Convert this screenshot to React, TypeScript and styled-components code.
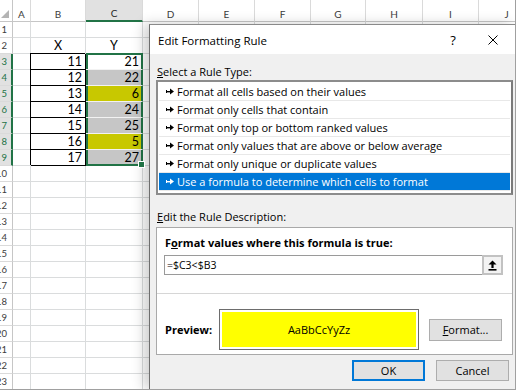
import React from 'react';
import styled, { createGlobalStyle, css } from 'styled-components';

const GREEN = '#217346';
const BLUE = '#0078d7';

const COL_NAMES = ['A', 'B', 'C', 'D', 'E', 'F', 'G', 'H', 'I', 'J'];
const ROW_COUNT = 23;
const X_VALUES = [11, 12, 13, 14, 15, 16, 17];
const Y_VALUES = [21, 22, 6, 24, 25, 5, 27];

const RULE_TYPES = [
    'Format all cells based on their values',
    'Format only cells that contain',
    'Format only top or bottom ranked values',
    'Format only values that are above or below average',
    'Format only unique or duplicate values',
    'Use a formula to determine which cells to format',
];

const GlobalStyle = createGlobalStyle`
  html, body {
    margin: 0;
    padding: 0;
    background: #ffffff;
  }
  body {
    font-family: "Open Sans", "Noto Sans", sans-serif;
  }
`;

export default function App() {
    const rows = Array.from({ length: ROW_COUNT }, (_, i) => i + 1);

    const renderCell = (row: number, col: string) => {
        const key = `${col}${row}`;
        const idx = row - 3;
        const inData = idx >= 0 && idx < X_VALUES.length;

        if (row === 2 && col === 'B') return <Cell key={key} $align="center">X</Cell>;
        if (row === 2 && col === 'C') return <Cell key={key} $align="center">Y</Cell>;
        if (inData && col === 'B') return <Cell key={key} $align="right" $boxed>{X_VALUES[idx]}</Cell>;
        if (inData && col === 'C') {
            const y = Y_VALUES[idx];
            const fill = idx === 0 ? '#ffffff' : y < X_VALUES[idx] ? '#c8c800' : '#c6c6c6';
            const last = idx === Y_VALUES.length - 1;
            return (
                <SelectedCell key={key} $align="right" $fill={fill} $top={idx === 0} $bottom={last}>
                    {y}
                    {last && <FillHandle />}
                </SelectedCell>
            );
        }
        return <Cell key={key} />;
    };

    return (
        <>
            <GlobalStyle />
            <Frame>
                <Sheet>
                    <Corner />
                    {COL_NAMES.map((c) => (
                        <ColHeader key={c} $selected={c === 'C'}>{c}</ColHeader>
                    ))}
                    {rows.map((r) => (
                        <React.Fragment key={r}>
                            <RowHeader $selected={r >= 3 && r <= 9}><span>{r}</span></RowHeader>
                            {COL_NAMES.map((c) => renderCell(r, c))}
                        </React.Fragment>
                    ))}
                </Sheet>

                <Dialog>
                    <TitleBar>
                        <Title>Edit Formatting Rule</Title>
                        <TitleButton>?</TitleButton>
                        <TitleButton>
                            <svg width="10" height="10" viewBox="0 0 10 10">
                                <path d="M0.5 0.5 L9.5 9.5 M9.5 0.5 L0.5 9.5" stroke="#000" strokeWidth="1" fill="none" />
                            </svg>
                        </TitleButton>
                    </TitleBar>

                    <Body>
                        <SectionLabel><u>S</u>elect a Rule Type:</SectionLabel>
                        <RuleList>
                            {RULE_TYPES.map((t, i) => (
                                <RuleItem key={t} $selected={i === 5}>
                                    <svg width="8" height="7" viewBox="0 0 8 7">
                                        <rect x="0" y="2" width="1" height="3" fill="currentColor" />
                                        <rect x="0" y="3" width="5" height="1.4" fill="currentColor" />
                                        <path d="M4 0.5 L8 3.5 L4 6.5 Z" fill="currentColor" />
                                    </svg>
                                    <span>{t}</span>
                                </RuleItem>
                            ))}
                        </RuleList>

                        <SectionLabel $spaced><u>E</u>dit the Rule Description:</SectionLabel>
                        <RuleBox>
                            <FormulaSection>
                                <BoldLabel>F<u>o</u>rmat values where this formula is true:</BoldLabel>
                                <FormulaField>
                                    <FormulaText>=$C3&lt;$B3</FormulaText>
                                    <CollapseButton>
                                        <svg width="9" height="11" viewBox="0 0 9 11">
                                            <path d="M4.5 0.5 L8.5 4.5 L5.6 4.5 L5.6 8 L3.4 8 L3.4 4.5 L0.5 4.5 Z" fill="#000" />
                                            <rect x="0.5" y="9" width="8" height="1.6" fill="#000" />
                                        </svg>
                                    </CollapseButton>
                                </FormulaField>
                            </FormulaSection>
                            <PreviewSection>
                                <PreviewLabel>Preview:</PreviewLabel>
                                <PreviewBox>
                                    <PreviewSample>AaBbCcYyZz</PreviewSample>
                                </PreviewBox>
                                <DialogButton $width={73} $height={22}><u>F</u>ormat...</DialogButton>
                            </PreviewSection>
                        </RuleBox>

                        <ButtonRow>
                            <DialogButton $width={73} $height={21} $default>OK</DialogButton>
                            <DialogButton $width={73} $height={21}>Cancel</DialogButton>
                        </ButtonRow>
                    </Body>
                </Dialog>
            </Frame>
        </>
    );
}

const Frame = styled.div`
    position: relative;
    box-sizing: border-box;
    width: 516px;
    height: 390px;
    overflow: hidden;
    border-right: 1px solid #a0a0a0;
    border-bottom: 1px solid #a0a0a0;
    background: #ffffff;
`;

const Sheet = styled.div`
    display: grid;
    grid-template-columns: 13px 18px 55px 57px 56px 56px 56px 55px 57px 56px 56px;
    grid-template-rows: 22px;
    grid-auto-rows: 16px;
    font-family: Lato, "Open Sans", sans-serif;
`;

const HeaderBase = styled.div`
    box-sizing: border-box;
    background: #ffffff;
    color: #3c3c3c;
    font-size: 9.5px;
    display: flex;
    overflow: hidden;
`;

const Corner = styled(HeaderBase)`
    position: relative;
    border-right: 1px solid #c6c6c6;
    border-bottom: 1px solid #c6c6c6;

    &::after {
        content: '';
        position: absolute;
        right: 3px;
        bottom: 3px;
        border-left: 8px solid transparent;
        border-bottom: 8px solid #b4b4b4;
    }
`;

const ColHeader = styled(HeaderBase)<{ $selected?: boolean }>`
    justify-content: center;
    align-items: center;
    padding-top: 6px;
    border-right: 1px solid #dadada;
    border-bottom: 1px solid #c6c6c6;
    font-size: 10px;

    ${(p) => p.$selected && css`
        background: #e1e1e1;
        border-bottom: 2px solid ${GREEN};
        color: #262626;
    `}
`;

const RowHeader = styled(HeaderBase)<{ $selected?: boolean }>`
    justify-content: flex-end;
    align-items: center;
    padding-right: 5px;
    border-right: 1px solid #c6c6c6;
    border-bottom: 1px solid #dadada;

    ${(p) => p.$selected && css`
        background: #e1e1e1;
        border-right: 2px solid ${GREEN};
        padding-right: 4px;
        color: ${GREEN};
    `}
`;

const Cell = styled.div<{ $align?: 'left' | 'center' | 'right'; $boxed?: boolean }>`
    box-sizing: border-box;
    display: flex;
    align-items: center;
    justify-content: ${(p) => (p.$align === 'right' ? 'flex-end' : p.$align === 'center' ? 'center' : 'flex-start')};
    padding: 0 3px;
    border-right: 1px solid #dadcdd;
    border-bottom: 1px solid #dadcdd;
    font-size: 12.5px;
    color: #000000;

    ${(p) => p.$boxed && css`
        border-right-color: #000000;
        border-bottom-color: #000000;
        box-shadow: -1px -1px 0 #000000;
    `}
`;

const SelectedCell = styled(Cell)<{ $fill: string; $top?: boolean; $bottom?: boolean }>`
    position: relative;
    padding-right: 3px;
    background: ${(p) => p.$fill};
    border-right: 1px solid ${GREEN};
    border-bottom: 1px solid ${(p) => (p.$bottom ? GREEN : '#f2f2f2')};
    box-shadow:
        inset 2px 0 0 ${GREEN},
        inset -1px 0 0 ${GREEN}
        ${(p) => (p.$top ? `, 0 -1px 0 ${GREEN}, inset 0 1px 0 ${GREEN}` : '')}
        ${(p) => (p.$bottom ? `, inset 0 -1px 0 ${GREEN}` : '')};
`;

const FillHandle = styled.div`
    position: absolute;
    right: -3px;
    bottom: -3px;
    width: 5px;
    height: 5px;
    background: ${GREEN};
    border: 1px solid #ffffff;
    z-index: 1;
`;

const Dialog = styled.div`
    position: absolute;
    left: 149px;
    top: 24px;
    right: 0;
    bottom: 0;
    display: flex;
    flex-direction: column;
    border-left: 1px solid #6e6e6e;
    border-top: 1px solid #8a8a8a;
    background: #f0f0f0;
    box-shadow: -5px 0 12px rgba(0, 0, 0, 0.2);
    font-family: "Open Sans", "Noto Sans", sans-serif;
    color: #000000;
`;

const TitleBar = styled.div`
    height: 29px;
    display: flex;
    align-items: center;
    padding: 0 2px 0 8px;
    background: #ffffff;
`;

const Title = styled.div`
    flex: 1;
    font-size: 11.5px;
    padding-top: 2px;
`;

const TitleButton = styled.div`
    width: 40px;
    height: 29px;
    display: flex;
    align-items: center;
    justify-content: center;
    font-size: 13px;
    padding-top: 1px;
`;

const Body = styled.div`
    flex: 1;
    display: flex;
    flex-direction: column;
    padding: 10px 2px 0 6px;
`;

const SectionLabel = styled.div<{ $spaced?: boolean }>`
    font-size: 11px;
    line-height: 16px;
    margin-left: 1px;
    margin-top: ${(p) => (p.$spaced ? '14px' : '0')};
`;

const RuleList = styled.div`
    box-sizing: border-box;
    height: 115px;
    padding: 1px;
    border: 2px solid #8c8c8c;
    border-right-color: #7a7a7a;
    background: #ffffff;
`;

const RuleItem = styled.div<{ $selected?: boolean }>`
    height: 17px;
    display: flex;
    align-items: center;
    gap: 3px;
    padding-left: 7px;
    border-bottom: 1px solid #e8e8e8;
    font-size: 11px;
    color: ${(p) => (p.$selected ? '#ffffff' : '#000000')};
    background: ${(p) => (p.$selected ? BLUE : 'transparent')};
    white-space: nowrap;

    svg {
        flex: none;
    }
`;

const RuleBox = styled.div`
    margin-top: 2px;
    border: 1px solid #a9a9a9;
    background: #ffffff;
`;

const FormulaSection = styled.div`
    padding: 7px 9px 18px 7px;
`;

const BoldLabel = styled.div`
    font-size: 11px;
    font-weight: 700;
    line-height: 16px;
    margin-left: 1px;
`;

const FormulaField = styled.div`
    margin-top: 4px;
    height: 20px;
    box-sizing: border-box;
    display: flex;
    border: 1px solid #9a9a9a;
    background: #ffffff;
`;

const FormulaText = styled.div`
    flex: 1;
    display: flex;
    align-items: center;
    padding-left: 2px;
    font-size: 10.5px;
`;

const CollapseButton = styled.div`
    box-sizing: border-box;
    width: 21px;
    margin: -1px -1px -1px 0;
    display: flex;
    align-items: center;
    justify-content: center;
    border: 2px solid #c2c2c2;
    background: #f3f3f3;
`;

const PreviewSection = styled.div`
    display: flex;
    align-items: center;
    padding: 15px 0 4px 8px;
    border-top: 1px solid #d6d6d6;
`;

const PreviewLabel = styled(BoldLabel)`
    width: 54px;
    margin-left: 0;
`;

const PreviewBox = styled.div`
    box-sizing: border-box;
    width: 200px;
    height: 41px;
    padding: 2px;
    margin-right: 10px;
    border: 1px solid #6d6d6d;
    background: #ffffff;
`;

const PreviewSample = styled.div`
    height: 100%;
    display: flex;
    align-items: center;
    justify-content: center;
    background: #ffff00;
    font-size: 11px;
`;

const DialogButton = styled.div<{ $width: number; $height: number; $default?: boolean }>`
    box-sizing: border-box;
    width: ${(p) => p.$width}px;
    height: ${(p) => p.$height}px;
    display: flex;
    align-items: center;
    justify-content: center;
    background: #e1e1e1;
    border: ${(p) => (p.$default ? `2px solid ${BLUE}` : '1px solid #adadad')};
    font-size: 11px;
`;

const ButtonRow = styled.div`
    display: flex;
    justify-content: flex-end;
    gap: 11px;
    margin-top: 5px;
    padding-right: 4px;
`;
